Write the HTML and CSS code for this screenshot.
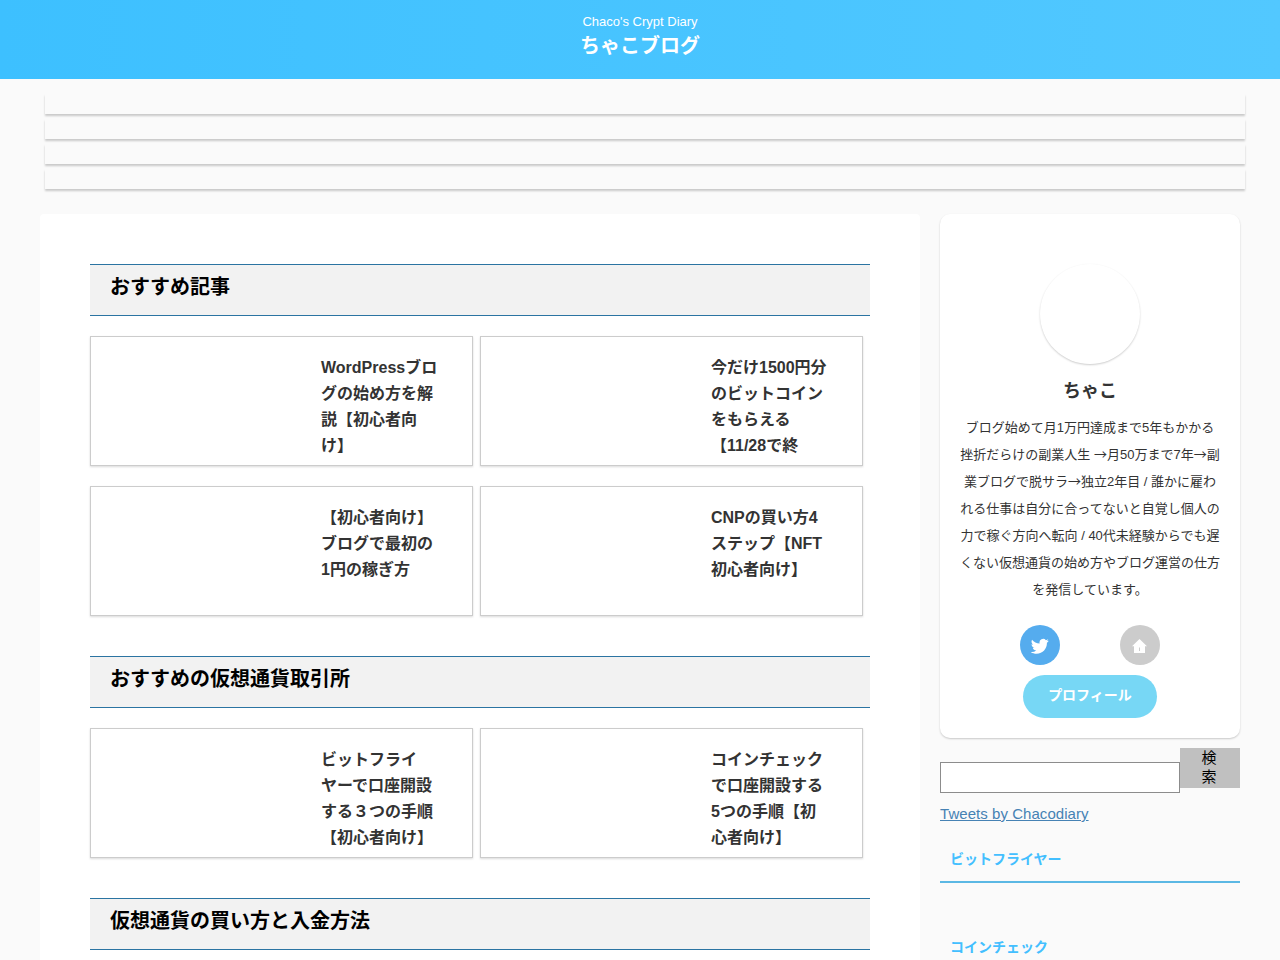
FILE: index.html
```
<!DOCTYPE html>
<html lang="ja">

<head>
    <meta charset="UTF-8">
    <meta name="viewport" content="width=device-width, initial-scale=1.0">
    <title>ちゃこブログ</title>
    <link rel="stylesheet" href="styles.css">
</head>

<body>
    <header class="header">
        <p class="descr">Chaco's Crypt Diary</p>
        <h1 class="sitename">ちゃこブログ</h1>
    </header>

    <div class="pickup">
        <div></div>
        <div></div>
        <div></div>
        <div></div>
    </div>

    <div class="content">
        <main class="main">
            <h2>おすすめ記事</h2>
            <div class="cards">
                <a class="card"><p>WordPressブロ<br>グの始め方を解<br>説【初心者向<br>け】</p></a>
                <a class="card"><p>今だけ1500円分<br>のビットコイン<br>をもらえる<br>【11/28で終</p></a>
                <a class="card"><p>【初心者向け】<br>ブログで最初の<br>1円の稼ぎ方</p></a>
                <a class="card"><p>CNPの買い方4<br>ステップ【NFT<br>初心者向け】</p></a>
            </div>
            <h2>おすすめの仮想通貨取引所</h2>
            <div class="cards">
                <a class="card"><p>ビットフライ<br>ヤーで口座開設<br>する３つの手順<br>【初心者向け】</p></a>
                <a class="card"><p>コインチェック<br>で口座開設する<br>5つの手順【初<br>心者向け】</p></a>
            </div>
            <h2>仮想通貨の買い方と入金方法</h2>
        </main>

        <aside class="side">
            <div class="profile">
                <div class="avatar"></div>
                <p class="name">ちゃこ</p>
                <p class="text">ブログ始めて月1万円達成まで5年もかかる<br>挫折だらけの副業人生 <span class="arrow">→</span>月50万まで7年<span class="arrow">→</span>副<br>業ブログで脱サラ<span class="arrow">→</span>独立2年目 / 誰かに雇わ<br>れる仕事は自分に合ってないと自覚し個人の<br>力で稼ぐ方向へ転向 / 40代未経験からでも遅<br>くない仮想通貨の始め方やブログ運営の仕方<br>を発信しています。</p>
                <div class="sns">
                    <a class="twitter">
                        <svg width="18" height="18" viewBox="0 0 24 24"><path fill="#fff" d="M23.6 4.9c-.9.4-1.8.6-2.8.8 1-.6 1.8-1.6 2.2-2.7-.9.6-2 1-3.1 1.2A4.9 4.9 0 0 0 11.500 8.700C7.400 8.500 3.800 6.500 1.400 3.600c-1.300 2.200-.7 5.100 1.500 6.600-.8 0-1.600-.2-2.200-.6 0 2.300 1.600 4.400 3.900 4.900-.7.200-1.500.2-2.200.1.600 2 2.400 3.400 4.600 3.400A9.900 9.900 0 0 1-.3 20c2.200 1.400 4.800 2.200 7.500 2.200 9.100 0 14.300-7.700 14-14.600 1-.7 1.800-1.600 2.400-2.700z"/></svg>
                    </a>
                    <a class="home">
                        <svg width="15" height="14" viewBox="0 0 15 14"><path fill="#fff" fill-rule="evenodd" d="M7.500 0 15 7.300h-2V14H2V7.300H0zM7 8.500V12h1V8.500z"/></svg>
                    </a>
                </div>
                <a class="btn">プロフィール</a>
            </div>

            <form class="search">
                <input type="text" aria-label="検索">
                <button type="button">検<br>索</button>
            </form>

            <a class="tweets" href="#">Tweets by Chacodiary</a>
            <h4>ビットフライヤー</h4>
            <h4>コインチェック</h4>
        </aside>
    </div>
</body>

</html>
```
FILE: styles.css
```
* {
    margin: 0;
    padding: 0;
    box-sizing: border-box;
}

html,
body {
    height: 960px;
    overflow: hidden;
}

body {
    background: #fafafa;
    color: #333;
    font-family: "Liberation Sans", "Noto Sans CJK JP", sans-serif;
}

.header {
    height: 79px;
    padding-top: 12px;
    text-align: center;
    color: #fff;
    background: linear-gradient(to right, #3dc0ff, #52c8ff);
}

.descr {
    font-size: 13px;
    line-height: 20px;
}

.sitename {
    font-size: 20px;
    line-height: 28px;
}

.pickup {
    margin: 15px 35px 0 45px;
}

.pickup div {
    height: 20px;
    margin-bottom: 5px;
    background: #fafafa;
    box-shadow: 0 2px 2px rgba(0, 0, 0, .2);
}

.content {
    display: flex;
    gap: 20px;
    width: 1200px;
    height: 746px;
    margin: 25px auto 0;
}

.main {
    width: 880px;
    padding: 50px 50px 0;
    background: #fff;
    border-radius: 4px 4px 0 0;
}

.main h2 {
    height: 52px;
    padding: 7px 20px;
    margin-bottom: 20px;
    color: #000;
    font-size: 20px;
    line-height: 31px;
    background: #f2f2f2;
    border-top: 1px solid #2b74a2;
    border-bottom: 1px solid #2b74a2;
}

.main h2:last-child {
    margin-bottom: 0;
}

.cards {
    display: grid;
    grid-template-columns: 383px 383px;
    gap: 20px 7px;
    margin-bottom: 40px;
}

.card {
    height: 130px;
    padding: 18px 0 0 230px;
    border: 1px solid #ccc;
    box-shadow: 0 1px 2px rgba(0, 0, 0, .15);
    font-size: 16px;
    font-weight: bold;
    line-height: 26px;
    white-space: nowrap;
}

.side {
    width: 300px;
}

.profile {
    height: 524px;
    padding-top: 50px;
    text-align: center;
    background: #fff;
    border-radius: 10px;
    box-shadow: 0 1px 2px rgba(0, 0, 0, .2);
}

.avatar {
    width: 100px;
    height: 100px;
    margin: 0 auto;
    border-radius: 50%;
    box-shadow: 0 1px 2px rgba(0, 0, 0, .2);
}

.name {
    margin-top: 12px;
    font-size: 18px;
    font-weight: bold;
    line-height: 30px;
}

.text {
    height: 189px;
    margin-top: 8px;
    font-size: 13px;
    line-height: 27px;
    white-space: nowrap;
}

.arrow {
    font-family: "Noto Sans CJK JP", sans-serif;
    line-height: 1;
}

.sns {
    display: flex;
    justify-content: center;
    gap: 60px;
    margin: 22px 0 10px;
}

.sns a {
    display: flex;
    align-items: center;
    justify-content: center;
    width: 40px;
    height: 40px;
    padding-top: 2px;
    border-radius: 50%;
}

.twitter {
    background: #55acee;
}

.home {
    background: #ccc;
}

.sns .home {
    padding-right: 1px;
}

.btn {
    display: block;
    width: 134px;
    height: 43px;
    margin: 0 auto;
    color: #fff;
    font-size: 14px;
    font-weight: bold;
    line-height: 40px;
    background: #77d7f5;
    border-radius: 22px;
}

.search {
    display: flex;
    align-items: flex-start;
    margin-top: 10px;
}

.search input {
    width: 240px;
    height: 31px;
    margin-top: 14px;
    background: #fff;
    border: 1px solid #8c8c8c;
}

.search button {
    width: 60px;
    height: 40px;
    padding: 0 2px 5px 0;
    color: #000;
    font-family: inherit;
    font-size: 15px;
    line-height: 19px;
    background: #c0c0c0;
    border: 0;
}

.tweets {
    display: block;
    margin-top: 11px;
    color: #4682b4;
    font-size: 15px;
    line-height: 20px;
    letter-spacing: .05px;
}

.side h4 {
    height: 47px;
    margin: 12px 0 41px;
    padding: 10px 10px 0;
    color: #43bfff;
    font-size: 14px;
    line-height: 26px;
    border-bottom: 2px solid #5bb8e4;
}

.side h4:last-child {
    height: 36px;
    margin-bottom: 0;
    border-bottom: 0;
}
```
